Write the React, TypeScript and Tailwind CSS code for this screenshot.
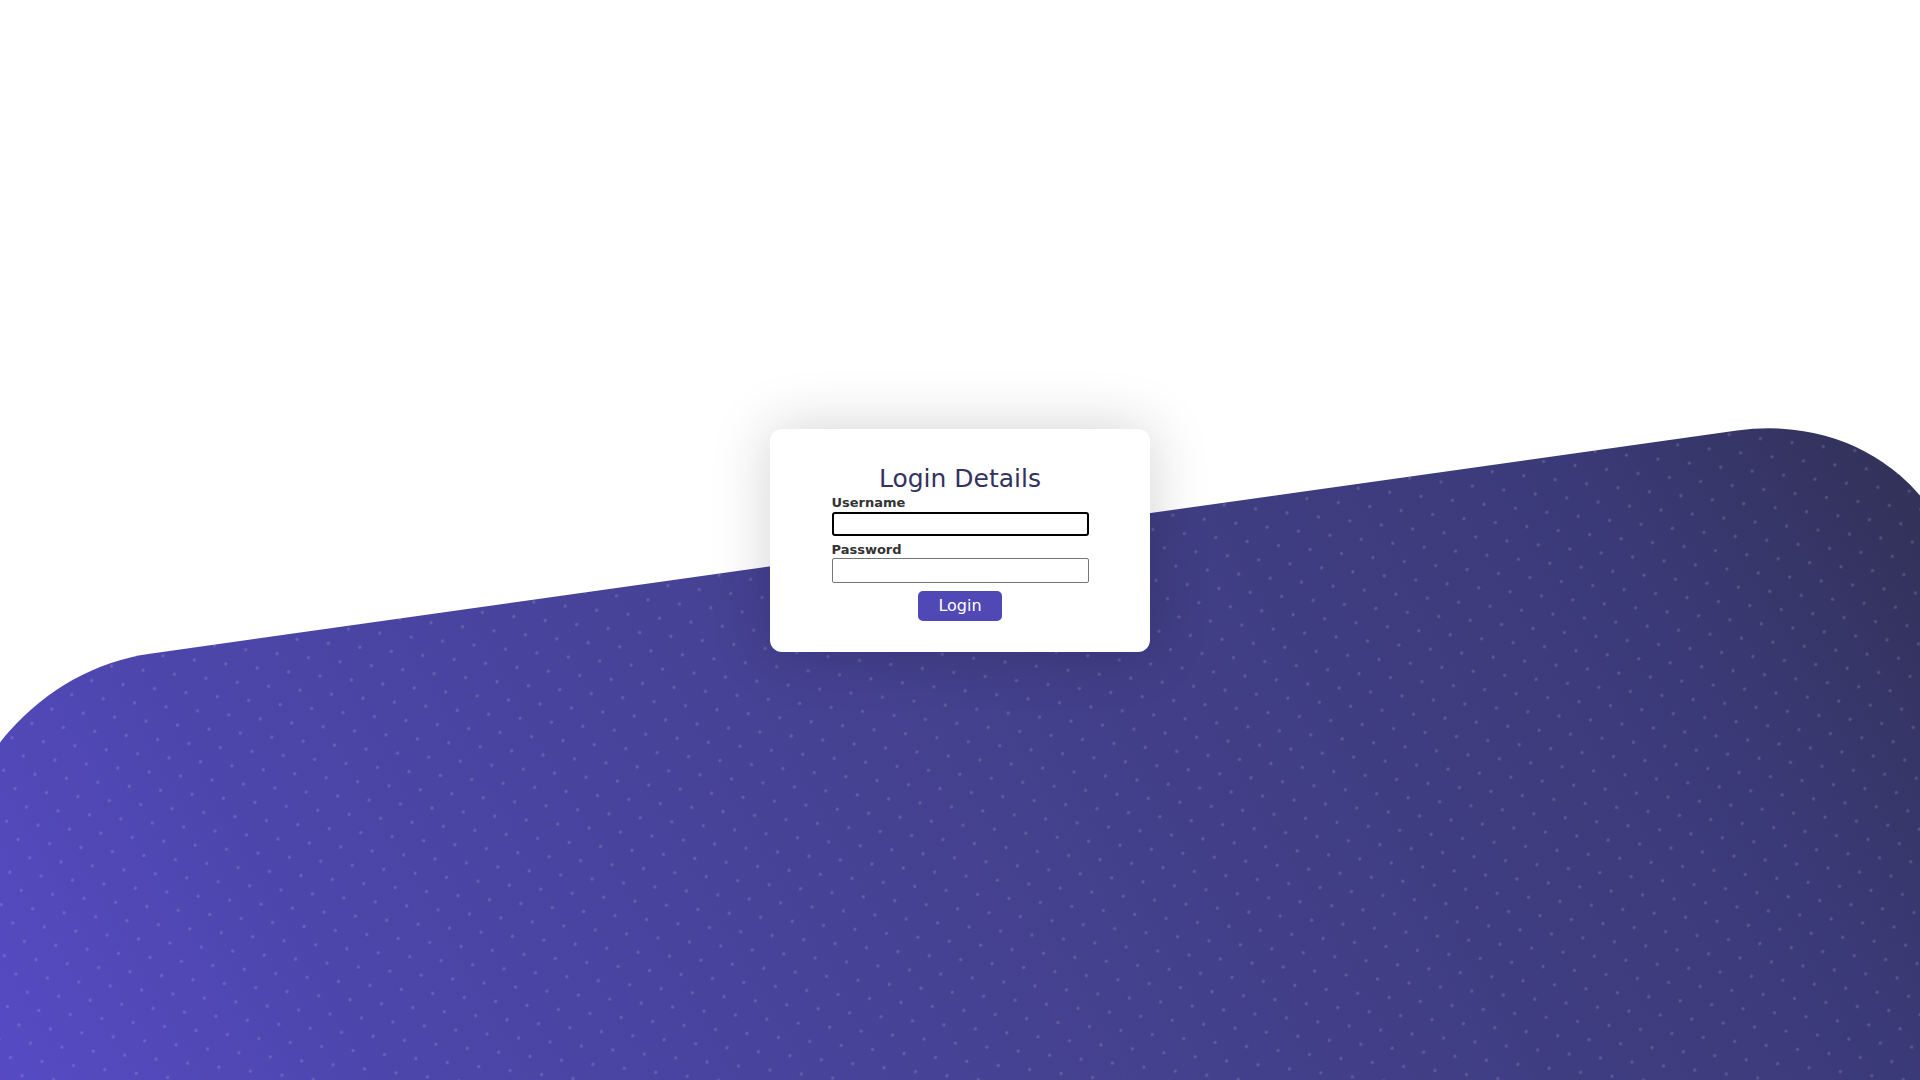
import { FC } from 'react'

const font = "font-['DejaVu_Sans','Liberation_Sans',sans-serif]"

const Backdrop: FC = () => (
  <div
    aria-hidden
    className="absolute left-[-50px] top-[540px] h-[1000px] w-[2017px] -skew-y-8 overflow-hidden rounded-tl-[200px] rounded-tr-[230px] bg-[linear-gradient(62deg,#5a4ccb_10%,#4c46ab_29%,#44418e_56%,#3b3a78_84%,#32325a_96%)]"
  >
    <div className="absolute -inset-1/2 rotate-[-30deg] [background-image:radial-gradient(circle,rgba(255,255,255,0.15)_1.3px,transparent_2px)] [background-size:23px_23px]" />
  </div>
)

const LoginCard: FC = () => (
  <div
    className={`relative z-10 flex w-[380px] flex-col items-center rounded-[12px] bg-white pb-[31px] pt-[35px] shadow-[0_0_60px_rgba(0,0,0,0.18)] ${font}`}
  >
    <h1 className="text-[25px] leading-[29px] text-[#33335e]">Login Details</h1>
    <form className="mt-[2px] flex w-[257px] flex-col" onSubmit={e => e.preventDefault()}>
      <label htmlFor="username" className="text-[13px] font-bold leading-[15px] text-[#333]">
        Username
      </label>
      <input
        id="username"
        type="text"
        className="mt-[2px] h-[24px] rounded-[3px] border-2 border-black px-1 text-[13px] outline-none"
      />
      <label htmlFor="password" className="mt-[6px] text-[13px] font-bold leading-[15px] text-[#333]">
        Password
      </label>
      <input
        id="password"
        type="password"
        className="mt-[1px] h-[25px] rounded-[2px] border border-[#767676] px-1 text-[13px] outline-none"
      />
      <button
        type="submit"
        className="mx-auto mt-[8px] h-[30px] w-[84px] rounded-[5px] bg-[#5048b5] text-[16px] text-white"
      >
        Login
      </button>
    </form>
  </div>
)

export default function App() {
  return (
    <div className="relative flex h-screen w-full items-center justify-center overflow-hidden bg-white">
      <Backdrop />
      <LoginCard />
    </div>
  )
}
